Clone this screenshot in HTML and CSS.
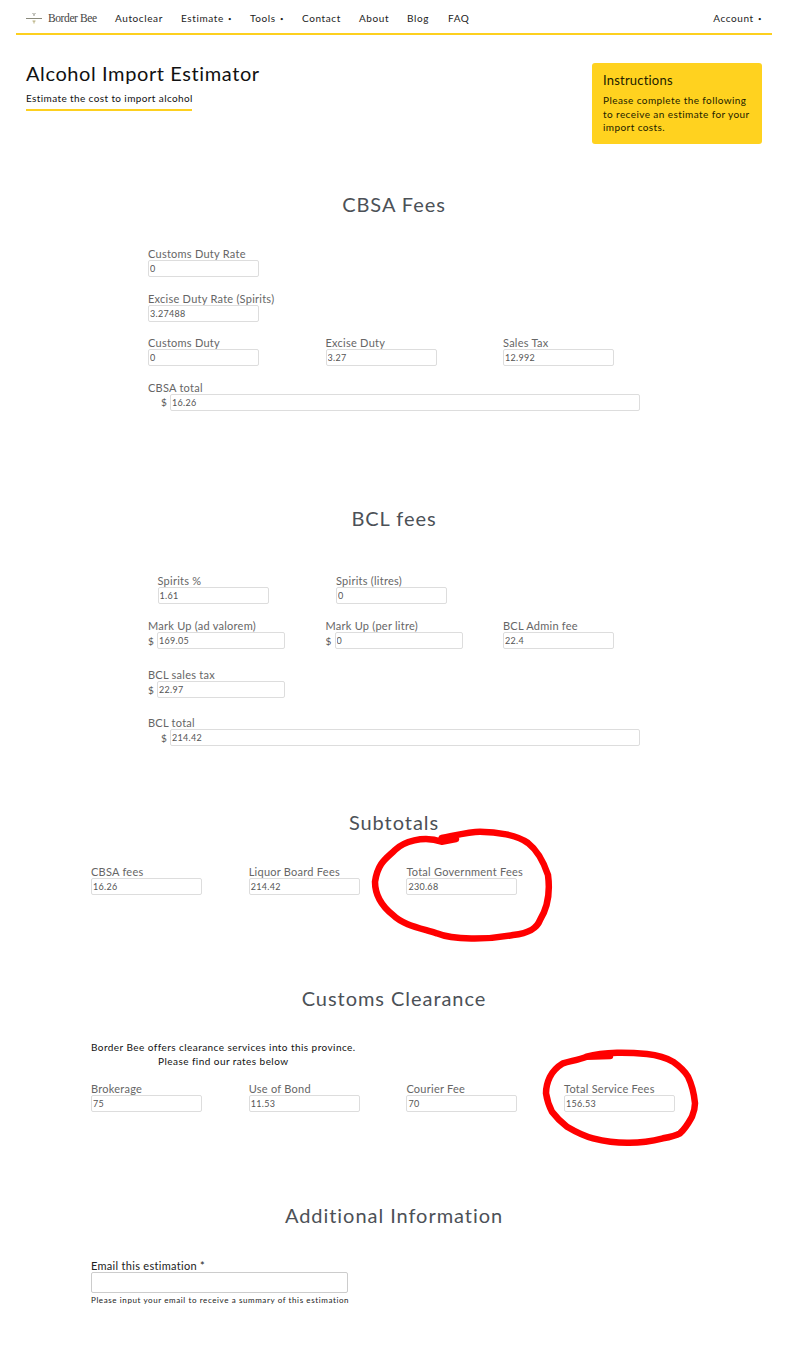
FILE: index.html
```html
<!DOCTYPE html>
<html>
<head>
    <title>Alcohol Import Estimator</title>
    <link rel="stylesheet" href="styles.css">
</head>
<body>
    <nav class="nav">
        <a class="brand" href="#">
            <svg class="brand-mark" width="16" height="14" viewBox="0 0 16 14">
                <path d="M0 7.5H16" stroke="#8a8a7c" stroke-width="1"/>
                <path d="M6.5 2l1.5 1.5L9.500 2M8 3.500V5" stroke="#77776a" stroke-width="0.8" fill="none"/>
                <path d="M6.500 10H9.500M8 10v2.500" stroke="#a59a5a" stroke-width="0.8" fill="none"/>
            </svg>
            Border Bee
        </a>
        <a class="nav-link autoclear" href="#">Autoclear</a>
        <a class="nav-link estimate" href="#">Estimate <span class="dot">&#8226;</span></a>
        <a class="nav-link tools" href="#">Tools <span class="dot">&#8226;</span></a>
        <a class="nav-link contact" href="#">Contact</a>
        <a class="nav-link about" href="#">About</a>
        <a class="nav-link blog" href="#">Blog</a>
        <a class="nav-link faq" href="#">FAQ</a>
        <a class="nav-link account" href="#">Account <span class="dot">&#8226;</span></a>
    </nav>

    <header class="page-head">
        <div>
            <h1>Alcohol Import Estimator</h1>
            <p class="subtitle">Estimate the cost to import alcohol</p>
        </div>
        <aside class="instructions">
            <h3>Instructions</h3>
            <p>Please complete the following to receive an estimate for your import costs.</p>
        </aside>
    </header>

    <section class="fees cbsa">
        <h2>CBSA Fees</h2>
        <div class="row first">
            <label class="field"><span>Customs Duty Rate</span><input value="0" readonly></label>
        </div>
        <div class="row">
            <label class="field"><span>Excise Duty Rate (Spirits)</span><input value="3.27488" readonly></label>
        </div>
        <div class="row">
            <label class="field"><span>Customs Duty</span><input value="0" readonly></label>
            <label class="field"><span>Excise Duty</span><input value="3.27" readonly></label>
            <label class="field"><span>Sales Tax</span><input value="12.992" readonly></label>
        </div>
        <div class="row">
            <label class="field total"><span>CBSA total</span><div class="money"><i>$</i><input value="16.26" readonly></div></label>
        </div>
    </section>

    <section class="fees bcl">
        <h2>BCL fees</h2>
        <div class="row first indented">
            <label class="field"><span>Spirits %</span><input value="1.61" readonly></label>
            <label class="field"><span>Spirits (litres)</span><input value="0" readonly></label>
        </div>
        <div class="row">
            <label class="field priced"><span>Mark Up (ad valorem)</span><div class="money"><i>$</i><input value="169.05" readonly></div></label>
            <label class="field priced"><span>Mark Up (per litre)</span><div class="money"><i>$</i><input value="0" readonly></div></label>
            <label class="field"><span>BCL Admin fee</span><input value="22.4" readonly></label>
        </div>
        <div class="row">
            <label class="field priced"><span>BCL sales tax</span><div class="money"><i>$</i><input value="22.97" readonly></div></label>
        </div>
        <div class="row">
            <label class="field total"><span>BCL total</span><div class="money"><i>$</i><input value="214.42" readonly></div></label>
        </div>
    </section>

    <section class="wide subtotals">
        <h2>Subtotals</h2>
        <div class="row">
            <label class="field"><span>CBSA fees</span><input value="16.26" readonly></label>
            <label class="field"><span>Liquor Board Fees</span><input value="214.42" readonly></label>
            <label class="field"><span>Total Government Fees</span><input value="230.68" readonly></label>
        </div>
    </section>

    <section class="wide clearance">
        <h2>Customs Clearance</h2>
        <p class="note">Border Bee offers clearance services into this province.<br>Please find our rates below</p>
        <div class="row">
            <label class="field"><span>Brokerage</span><input value="75" readonly></label>
            <label class="field"><span>Use of Bond</span><input value="11.53" readonly></label>
            <label class="field"><span>Courier Fee</span><input value="70" readonly></label>
            <label class="field"><span>Total Service Fees</span><input value="156.53" readonly></label>
        </div>
    </section>

    <section class="wide additional">
        <h2>Additional Information</h2>
        <label class="email"><span>Email this estimation *</span><input type="text"></label>
        <small class="hint">Please input your email to receive a summary of this estimation</small>
    </section>

    <!-- hand drawn marks on top of the page -->
    <svg class="marks" width="800" height="1346" viewBox="0 0 800 1346">
        <path d="M441.700 841.700L456 839M441.700 841.700C423 835 403 842 395 850C387 858 378 862 375 881.700C375 897 383 907 393 915C403 925 420 928 436.700 933.300C453 940 487 940 513 935C530 933 537 928 540 920C548 907 550 890 548 875C543 860 537 850 528 843C517 835 497 831.700 480 831.700C470 831.700 457 835 441.700 838"/>
        <path d="M586.700 1056.700C578 1060 570 1061 563 1063.300C557 1067 553 1071 550 1076.700C547 1083 546 1088 546 1093.300C547 1100 549 1106 552 1111.700C556 1117 561 1122 567 1126.700C576 1132 584 1136 593 1138.300C604 1141 615 1142.700 627 1142.700C640 1143 652 1141 663 1138.300C670 1137 675 1136 680 1133.300C686 1128 689 1122 692 1116.700C694 1112 695 1108 695 1103.300C694 1093 692 1085 688 1076.700C684 1070 679 1066 673 1061.700C665 1057 656 1055 647 1054C637 1053 627 1052.500 617 1052.700C606 1053 596 1054 586.700 1056.700L610 1056"/>
    </svg>
</body>
</html>
```

FILE: styles.css
```css
html { background: #fff; overflow: hidden; }
body { margin: 0; width: 788px; height: 1346px; position: relative; font-family: Lato, sans-serif; color: #111; }
a { color: inherit; text-decoration: none; }

.nav { display: flex; align-items: center; margin: 0 16px; padding: 2px 10px 0; box-sizing: border-box; border-bottom: 2px solid #fdd01f; height: 35px; font-size: 10px; letter-spacing: 0.6px; color: #222; }
.brand { display: flex; align-items: center; gap: 6px; width: 89px; font: 11.500px "Liberation Serif", serif; letter-spacing: -0.4px; color: #444; }
.nav-link { white-space: nowrap; }
.dot { font-size: 6px; vertical-align: 1px; margin-left: 1px; }
.autoclear { width: 66px; }
.estimate { width: 69px; }
.tools { width: 52px; }
.contact { width: 57px; }
.about { width: 48px; }
.blog { width: 41px; }
.account { margin-left: auto; }

.page-head { display: flex; justify-content: space-between; align-items: flex-start; margin: 28px 26px 0 26px; height: 119px; }
h1 { margin: -2px 0 0; font-size: 20px; line-height: 24px; font-weight: 400; letter-spacing: 0.6px; color: #111; }
.subtitle { margin: 6px 0 0; width: 166px; height: 18px; border-bottom: 2px solid #fdd01f; font-size: 10px; line-height: 14px; letter-spacing: 0.39px; white-space: nowrap; }
.instructions { width: 170px; height: 81px; box-sizing: border-box; padding: 10px 11px; background: #ffd21f; border-radius: 3px; color: #221c00; }
.instructions h3 { margin: 0 0 6px; font-size: 13px; line-height: 15px; font-weight: 400; letter-spacing: 0.2px; }
.instructions p { margin: 0; font-size: 10px; line-height: 13.500px; letter-spacing: 0.42px; }

h2 { margin: 0; text-align: center; font-size: 20px; line-height: 26px; font-weight: 400; letter-spacing: 0.95px; color: #4c5157; }

.row { display: flex; margin-top: 13.500px; height: 31px; }
.field { display: block; flex: none; font-size: 11px; color: #666; letter-spacing: 0.25px; }
.field > span { display: block; height: 14px; line-height: 16px; white-space: nowrap; }
input { display: block; box-sizing: border-box; width: 111px; height: 17px; padding: 0 1px; border: 1px solid #ddd; border-radius: 2px; background: #fff; font: 9px Lato, sans-serif; letter-spacing: 0.3px; color: #555; outline: none; }
.money { display: flex; align-items: center; }
.money i { font-style: normal; width: 9px; font-size: 10px; color: #555; }

.fees { padding-left: 148px; }
.fees .field { width: 177.500px; }
.fees h2 { margin-left: -148px; }
.cbsa { height: 314px; box-sizing: border-box; }
.cbsa h2 { margin-top: 9px; }
.cbsa .row.first { margin-top: 29px; }
.fees .total .money { padding-left: 13px; }
.fees .total { width: 500px; }
.fees .total input { width: 470px; }
.fees .priced input { width: 128px; }
.bcl { height: 304px; box-sizing: border-box; }
.bcl .row.first { margin-top: 42px; padding-left: 9.500px; }
.bcl .row.first .field { width: 178.500px; }
.bcl .row:nth-of-type(2) { margin-top: 14px; }
.bcl .row:nth-of-type(3) { margin-top: 18px; }
.bcl .row:nth-of-type(4) { margin-top: 17px; }

.wide { padding-left: 91px; }
.wide h2 { margin-left: -91px; }
.wide .field { width: 157.700px; }
.subtotals { height: 176px; box-sizing: border-box; }
.subtotals h2 { margin-bottom: 29px; }
.subtotals .row { margin-top: 0; }
.clearance { height: 217px; box-sizing: border-box; }
.note { width: fit-content; margin: 30px 0 13px; text-align: center; font-size: 10px; line-height: 13.500px; letter-spacing: 0.44px; color: #111; }
.clearance .row { margin-top: 0; }
.email { display: block; width: 257px; margin-top: 30px; font-size: 11px; letter-spacing: 0.3px; color: #222; }
.email span { display: block; height: 14px; line-height: 15px; }
.email input { width: 257px; height: 21px; border-color: #ccc; }
.hint { display: block; margin-top: 1px; font-size: 8px; line-height: 12px; letter-spacing: 0.6px; color: #222; white-space: nowrap; }

.marks { position: absolute; top: 0; left: 0; pointer-events: none; }
.marks path { fill: none; stroke: #f00; stroke-width: 6.500; stroke-linecap: round; stroke-linejoin: round; }
```
